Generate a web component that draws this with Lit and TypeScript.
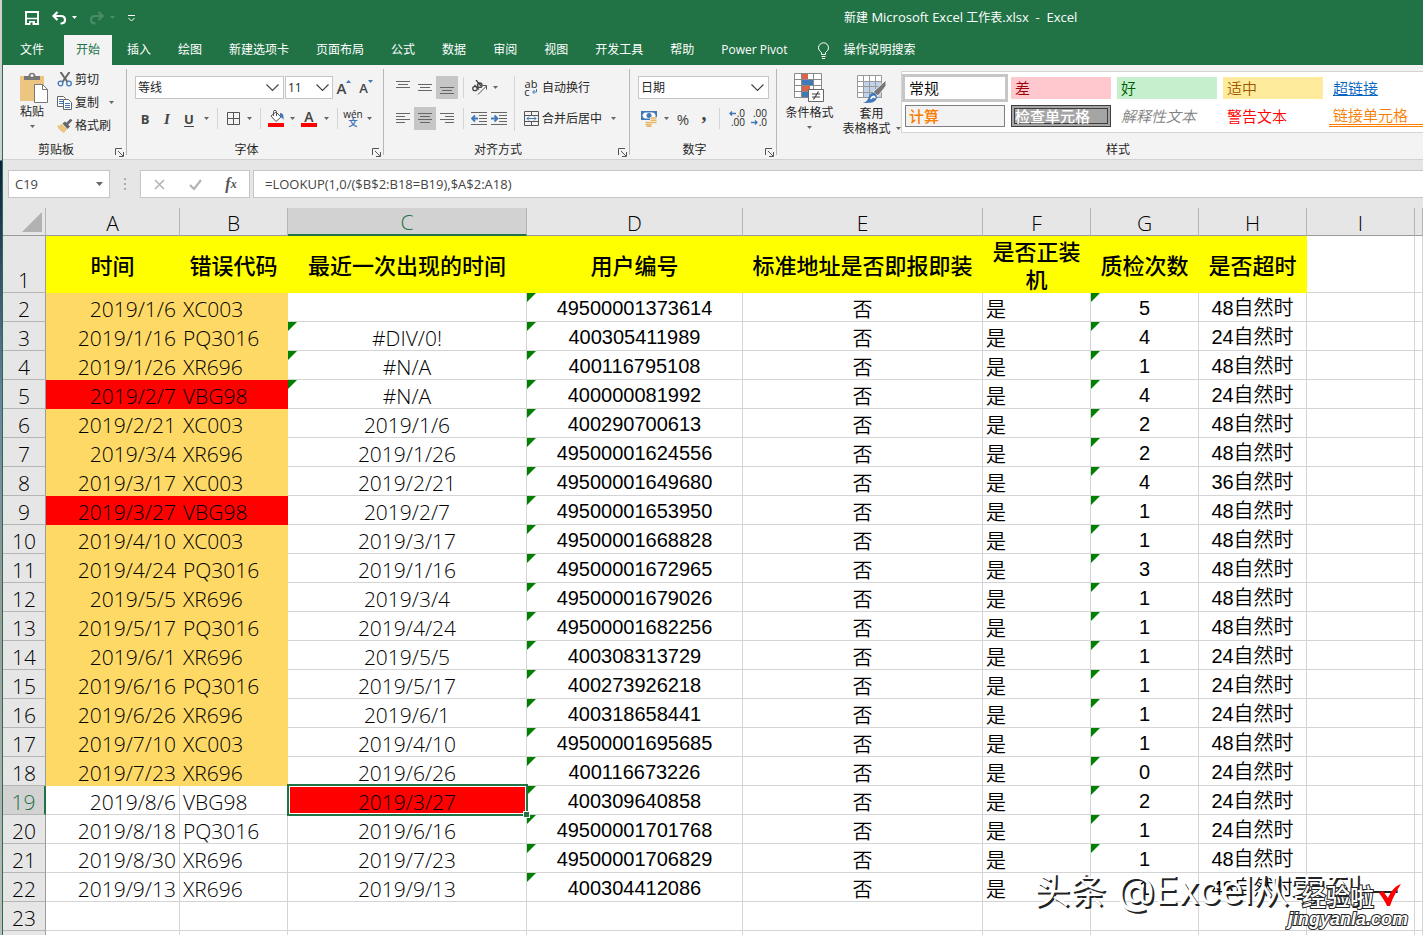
import { LitElement, html, css, svg, nothing } from "lit";
import { customElement } from "lit/decorators.js";
import { classMap } from "lit/directives/class-map.js";

type Row = [string, string, string, string, string, string];

// date, code, last seen, user id, checks, overtime
const ROWS: Row[] = [
  ["2019/1/6", "XC003", "", "49500001373614", "5", "48自然时"],
  ["2019/1/16", "PQ3016", "#DIV/0!", "400305411989", "4", "24自然时"],
  ["2019/1/26", "XR696", "#N/A", "400116795108", "1", "48自然时"],
  ["2019/2/7", "VBG98", "#N/A", "400000081992", "4", "24自然时"],
  ["2019/2/21", "XC003", "2019/1/6", "400290700613", "2", "48自然时"],
  ["2019/3/4", "XR696", "2019/1/26", "49500001624556", "2", "48自然时"],
  ["2019/3/17", "XC003", "2019/2/21", "49500001649680", "4", "36自然时"],
  ["2019/3/27", "VBG98", "2019/2/7", "49500001653950", "1", "48自然时"],
  ["2019/4/10", "XC003", "2019/3/17", "49500001668828", "1", "48自然时"],
  ["2019/4/24", "PQ3016", "2019/1/16", "49500001672965", "3", "48自然时"],
  ["2019/5/5", "XR696", "2019/3/4", "49500001679026", "1", "48自然时"],
  ["2019/5/17", "PQ3016", "2019/4/24", "49500001682256", "1", "48自然时"],
  ["2019/6/1", "XR696", "2019/5/5", "400308313729", "1", "24自然时"],
  ["2019/6/16", "PQ3016", "2019/5/17", "400273926218", "1", "24自然时"],
  ["2019/6/26", "XR696", "2019/6/1", "400318658441", "1", "24自然时"],
  ["2019/7/10", "XC003", "2019/4/10", "49500001695685", "1", "48自然时"],
  ["2019/7/23", "XR696", "2019/6/26", "400116673226", "0", "24自然时"],
  ["2019/8/6", "VBG98", "2019/3/27", "400309640858", "2", "24自然时"],
  ["2019/8/18", "PQ3016", "2019/6/16", "49500001701768", "1", "24自然时"],
  ["2019/8/30", "XR696", "2019/7/23", "49500001706829", "1", "48自然时"],
  ["2019/9/13", "XR696", "2019/9/13", "400304412086", "1", "48自然时"],
];

const HEADS = ["时间", "错误代码", "最近一次出现的时间", "用户编号", "标准地址是否即报即装", "是否正装机", "质检次数", "是否超时"];
const TABS = ["文件", "开始", "插入", "绘图", "新建选项卡", "页面布局", "公式", "数据", "审阅", "视图", "开发工具", "帮助", "Power Pivot"];

const icon = (w: number, h: number, body: unknown) =>
  html`<svg width=${w} height=${h} viewBox="0 0 ${w} ${h}" fill="none" aria-hidden="true">${body}</svg>`;

const caret = icon(5, 3, svg`<path d="M0 0h5L2.500 3z" fill="#666"/>`);
const lines = (spec: number[][]) =>
  icon(14, 13, svg`${spec.map(([x, y, w]) => svg`<path d="M${x} ${y + 0.5}h${w}" stroke="#666"/>`)}`);

const I = {
  save: icon(14, 14, svg`<path d="M1 1h12v12H1z" stroke="#fff" stroke-width="2"/><path d="M2 7.500h10" stroke="#fff" stroke-width="1.500"/><path d="M4 10h6v4H4z" fill="#fff"/><path d="M5.500 11.500h2V14h-2z" fill="#217346"/>`),
  undo: icon(16, 14, svg`<path d="M6.500 1L2.500 5l4 4M3 5h7c3 0 4 1.500 4 4s-1.500 3.500-4.500 3.500" stroke="#fff" stroke-width="2.200"/>`),
  redo: icon(16, 14, svg`<path d="M9.500 1l4 4-4 4M13 5H6C3 5 2 6.500 2 9s1.500 3.500 4.500 3.500" stroke="#4a8c69" stroke-width="2.200"/>`),
  more: icon(9, 8, svg`<path d="M1 1.500h7M1.500 4l3 3 3-3" stroke="#fff"/>`),
  bulb: icon(13, 17, svg`<path d="M4.500 12.500v-2C2.500 9 1.500 7.500 1.500 5.800a5 5 0 0 1 10 0c0 1.700-1 3.200-3 4.700v2zM4.500 14.500h4M5 16.500h3" stroke="#fff"/>`),
  paste: icon(30, 32, svg`<path d="M1 4h24v25H1z" fill="#ecc680"/><path d="M5 8V4h4.500c0-4.500 7-4.500 7 0H21v4z" fill="#777"/><circle cx="13" cy="3.500" r="1.500" fill="#f3f3f3"/><path d="M15.500 12.500h8l5 5v13h-13z" fill="#fff" stroke="#777"/><path d="M23.500 12.500v5h5" stroke="#777"/>`),
  cut: icon(15, 15, svg`<path d="M3 0l7 10M12 0L5 10" stroke="#666" stroke-width="2"/><circle cx="3" cy="11.500" r="2.300" stroke="#4178b8" stroke-width="1.300"/><circle cx="11.500" cy="11.500" r="2.300" stroke="#4178b8" stroke-width="1.300"/>`),
  copy: icon(16, 14, svg`<path d="M.5.5h6l2 2v8h-8z" fill="#fff" stroke="#666"/><path d="M2 3.500h4M2 5.500h4M2 7.500h4" stroke="#4178b8"/><path d="M6.500 3.500h5l3 3v7h-8z" fill="#fff" stroke="#666"/><path d="M8 7.500h5M8 9.500h5M8 11.500h5" stroke="#4178b8"/>`),
  brush: icon(16, 14, svg`<path d="M0 7l5-2 5 5-3 4C5 13 2 11 0 7z" fill="#ecc680"/><path d="M5.500 4.500l2.500-2 5 5-2.500 2.500z" fill="#666"/><path d="M10 5l4.500-4.500" stroke="#666" stroke-width="2.600"/>`),
  launch: icon(9, 9, svg`<path d="M.5 7V.5H7M3 3l5 5M8.500 4v4.500H4" stroke="#555"/>`),
  border: icon(13, 13, svg`<path d="M.5.5h12v12H.5zM6.500 1v11M1 6.500h11" stroke="#555"/>`),
  fill: icon(17, 17, svg`<path d="M3 6l5-4 5 5-5 4.500z" fill="#fff" stroke="#555"/><path d="M5.500 6V1.500c0-1.500 3-1.500 3 0V6" stroke="#555"/><path d="M12 3c3 0 4 2 3.500 7-1-2-2.500-3-3.500-2.500z" fill="#4178b8"/><path d="M0 13h16v4H0z" fill="red"/>`),
  merge: icon(15, 15, svg`<path d="M.5.5h14v14H.5zM.5 4.500h14M.5 10.500h14M7.500.5v4M7.500 10.500v4" stroke="#555"/><path d="M3 7.500h9M5 5.500l-2 2 2 2M10 5.500l2 2-2 2" stroke="#4178b8"/>`),
  orient: icon(17, 16, svg`<g stroke="#444" stroke-width="1.300"><circle cx="4" cy="8.500" r="2.200"/><path d="M3.500 5l4.500 4.500"/><circle cx="8.800" cy="5.200" r="2.200"/><path d="M5 0l5 6"/></g><path d="M7 14.500L15.500 6M11.500 5.500h4v4" stroke="#555"/>`),
  indentL: icon(16, 13, svg`<path d="M0 .5h16M8 3.500h8M8 6.500h8M8 9.500h8M0 12.500h16" stroke="#666"/><path d="M1 6.500h6M4 3.500l-3 3 3 3" stroke="#4178b8" stroke-width="1.800"/>`),
  indentR: icon(16, 13, svg`<path d="M0 .5h16M8 3.500h8M8 6.500h8M8 9.500h8M0 12.500h16" stroke="#666"/><path d="M0 6.500h6M3.500 3.500l3 3-3 3" stroke="#4178b8" stroke-width="1.800"/>`),
  wrap: icon(6, 5, svg`<path d="M4.500 0v3H1M2.500 1L.7 3l1.800 2" stroke="#4178b8"/>`),
  money: icon(17, 16, svg`<path d="M0 0h16v9H0z" fill="#4178b8"/><path d="M1.500 1.500h13v6h-13z" fill="#fff"/><path d="M1 1h3L1 4zM15 1v3l-3-3zM1 8V5l3 3z" fill="#4178b8"/><circle cx="8" cy="4.500" r="2.500" fill="#4178b8"/><path d="M9 6h7v9.500H5.500V10H9z" fill="#f3f3f3"/><path d="M10 7h5M10 9.200h5M10 11.400h5M5 11.400h4M5 13.400h5M6 15.300h4" stroke="#e8b666" stroke-width="1.500" stroke-linecap="round"/>`),
  arrowL: icon(7, 5, svg`<path d="M7 2.500H1M3 .5l-2 2 2 2" stroke="#4178b8" stroke-width="1.400"/>`),
  arrowR: icon(7, 5, svg`<path d="M0 2.500h6M4 .5l2 2-2 2" stroke="#4178b8" stroke-width="1.400"/>`),
  cond: icon(31, 30, svg`<path d="M.5.5h27v24H.5z" fill="#fff"/><path d="M8 1h6v5H8zM8 13h8v5H8z" fill="#d9644a"/><path d="M8 7h11v5H8zM8 19h6v6H8z" fill="#4178b8"/><path d="M.5.5h27v24H.5zM.5 6.500h27M.5 12.500h27M.5 18.500h27M7.500.5v24M19.500.5v24" stroke="#888"/><path d="M14.500 16.500h15v12h-15z" fill="#fff" stroke="#666"/><path d="M18 21h8M18 24h8M24.500 18.500l-5 8" stroke="#444" stroke-width="1.200"/>`),
  tableFmt: icon(30, 29, svg`<path d="M.5.5h24v22H.5z" fill="#fff"/><path d="M7 6h18v17H7z" fill="#c0d3ea"/><path d="M.5.5h24v22H.5zM.5 6.500h24M.5 11.500h24M.5 17.500h24M6.500.5v22M12.500.5v22M18.500.5v22" stroke="#999"/><path d="M29 5v6l-8 10-5-4z" fill="#777" stroke="#f3f3f3"/><path d="M17.500 18c3 2 3 5 1 7.500C16 28 12 28 6 28c4-1 5-4 6-6.500 1-3 3.500-4.500 5.500-3.500z" fill="#4178b8"/><path d="M14 24c1-3 3-3 4-1" stroke="#fff" stroke-width="2"/>`),
  cancel: icon(11, 11, svg`<path d="M1 1l9 9M10 1l-9 9" stroke="#b4b4b4" stroke-width="1.600"/>`),
  check: icon(13, 11, svg`<path d="M1 6l4 4 7-9" stroke="#b4b4b4" stroke-width="2.200"/>`),
  corner: icon(20, 20, svg`<path d="M20 0v20H0z" fill="#b2b2b2"/>`),
  tick: icon(24, 24, svg`<path d="M1 10l4-2 5 7C13 8 17 3 23 1c-4 6-8 13-11 22H9C7 18 4 14 1 10z" fill="red"/>`),
};

@customElement("app-root")
export class AppRoot extends LitElement {
  static styles = css`
    :host {
      display: block;
      height: 100vh;
      overflow: hidden;
      --ui: "Open Sans", "Noto Sans CJK SC", sans-serif;
      --sheet: "Noto Sans CJK SC", sans-serif;
      font: 12px/16px var(--ui);
      color: #262626;
    }
    * { box-sizing: border-box; }
    svg { display: block; flex: none; }
    button, input, select {
      font: inherit; color: inherit; border: 0; padding: 0; margin: 0;
      background: none; border-radius: 0; appearance: none; outline: 0;
    }
    .window {
      position: relative; height: 100%; overflow: hidden; margin-left: 2px;
      border-left: 1px solid #217346; background: #e6e6e6;
      display: flex; flex-direction: column;
    }
    .edge { height: 100%; background: linear-gradient(#d0d0d0 160px, #0b1f3f 161px, #6b83a3 400px, #9a9a9a 600px, #bdbdbd); }
    .green { background: #217346; color: #fff; flex: none; }
    .title { height: 35px; display: flex; align-items: center; }
    .quick { display: flex; align-items: center; padding-left: 22px; gap: 12px; flex: 0 0 841px; }
    .quick div { display: flex; align-items: center; gap: 5px; }
    .doc { white-space: pre; font-size: 13px; }
    .doc span { font-size: 12px; }
    .tabs { display: flex; gap: 3px; height: 30px; }
    .tab { padding: 0 12px; line-height: 28px; white-space: nowrap; }
    .tab:first-child { padding: 0 17px; }
    .tab.on { background: #f3f3f3; color: #217346; }
    .tell { display: flex; align-items: center; gap: 13px; padding: 0 15px; }
    .ribbon { display: flex; height: 95px; background: #f3f3f3; border-bottom: 1px solid #d2d2d2; overflow: hidden; flex: none; }
    .group { position: relative; display: flex; flex-direction: column; flex: none; padding-top: 3px; white-space: nowrap; }
    .group::after { content: ""; position: absolute; right: 0; top: 4px; height: 86px; width: 1px; background: #b8b8b8; }
    .group.clip { width: 124px; } .group.font { width: 257px; } .group.align { width: 246px; }
    .group.num { width: 147px; } .group.styles { width: 682px; }
    .group.styles::after { display: none; }
    .body { height: 70px; display: flex; flex: none; }
    .foot { display: flex; align-items: center; flex: 1; padding-top: 3px; }
    .foot span { flex: 1; text-align: center; }
    .foot button { width: 18px; height: 9px; padding-left: 6px; margin-top: 4px; }
    .big { display: flex; flex-direction: column; align-items: center; line-height: 15px; }
    .paste { width: 58px; padding-top: 4px; }
    .paste svg:first-child { margin-left: 4px; }
    .paste svg:last-child { margin-top: 6px; }
    .stack { display: flex; flex-direction: column; }
    .stack button { display: flex; align-items: center; height: 23px; gap: 2px; text-align: left; }
    .stack svg:first-child { width: 16px; margin-left: -4px; }
    .stack .gap { margin-left: 8px; }
    .stack .gap svg { margin: 0; width: 5px; }
    .rows { display: flex; flex-direction: column; gap: 8px; padding: 8px 0 0 7px; }
    .align .rows, .num .rows { padding-left: 8px; }
    .align .nopad { padding-left: 0; }
    .row { display: flex; align-items: center; height: 23px; }
    .b, .s, .a { display: flex; align-items: center; justify-content: center; height: 23px; flex: none; }
    .b { width: 22px; } .s { width: 20px; } .a { width: 12px; }
    .on2 { background: #c6c6c6; }
    .sep { width: 1px; height: 21px; margin: 0 5px; background: #d4d4d4; flex: none; }
    .tall { width: 1px; height: 55px; margin: 8px 5px 0; background: #d4d4d4; flex: none; }
    .glyph { color: #444; font-weight: 700; font-size: 13px; }
    .it { font-style: italic; font-family: "Liberation Serif", serif; font-size: 15px; }
    .un { text-decoration: underline; text-underline-offset: 2px; }
    .colorA { flex-direction: column; font-size: 14px; line-height: 13px; font-weight: 600; color: #444; }
    .colorA i { width: 16px; height: 4px; background: red; }
    .grow { font-size: 15px; color: #444; font-weight: 600; }
    .grow.small { font-size: 13px; }
    .grow svg { align-self: flex-start; margin-top: 4px; }
    .wen { flex-direction: column; line-height: 8px; font-size: 10px; }
    .wen b { color: #4178b8; font: 700 9px/9px var(--sheet); }
    .wrapico { flex-direction: column; line-height: 8px; font-size: 11px; }
    .wrapico span { display: flex; align-items: center; gap: 2px; }
    .dec { flex-direction: column; font-size: 10px; line-height: 9px; padding-bottom: 2px; }
    .dec span { display: flex; align-items: center; gap: 1px; align-self: flex-end; }
    .pct { font-size: 15px; color: #444; }
    .comma { font: 700 20px/10px "Liberation Serif", serif; color: #444; padding-bottom: 12px; }
    .label { display: flex; align-items: center; height: 23px; }
    .merge { gap: 5px; }
    select {
      height: 23px; border: 1px solid #c6c6c6; padding-left: 2px; color: #262626;
      background: #fff url('data:image/svg+xml,<svg xmlns="http://www.w3.org/2000/svg" width="13" height="8" fill="none" stroke="%23444" stroke-width="1.200"><path d="M.5.5l6 6 6-6"/></svg>') no-repeat right 4px center;
    }
    .face { width: 149px; margin-left: 1px; } .size { width: 48px; margin-left: 1px; } .fmt { width: 131px; }
    .size { background-position: right 3px center; }
    .cond { width: 65px; padding-top: 5px; }
    .cond span, .tfmt span { margin-top: 2px; }
    .cond svg:last-child { margin-top: 6px; }
    .tfmt { width: 59px; padding-top: 7px; }
    .tfmt div { display: flex; align-items: center; gap: 5px; }
    .gallery {
      margin-top: 3px; height: 62px; border: 1px solid #d4d4d4; background: #fff;
      display: grid; grid-template: 22px 22px / repeat(5, 100px); gap: 6px; padding: 5px 3px; flex: 1;
    }
    .cell { font: 350 15px/19px var(--sheet); padding: 0 0 2px 4px; text-align: left; height: 22px; white-space: nowrap; }
    .normal { outline: 3px solid #c6c6c6; color: #000; }
    .bad { background: #ffc7ce; color: #9c0006; } .good { background: #c6efce; color: #006100; }
    .neutral { background: #ffeb9c; color: #9c5700; } .link { color: #0563c1; text-decoration: underline; }
    .calc { background: #f2f2f2; border: 1px solid #7f7f7f; color: #fa7d00; font-weight: 500; padding: 0 0 2px 3px; line-height: 17px; }
    .chk { background: #a5a5a5; border: 4px double #3f3f3f; color: #fff; font-weight: 500; line-height: 12px; padding: 0; }
    .explain { color: #7f7f7f; font-style: italic; } .warn { color: red; }
    .linked { color: #fa7d00; border-bottom: 3px double #ff8001; padding-bottom: 0; line-height: 18px; }
    .fbar { display: flex; height: 48px; align-items: center; padding: 0 0 0 5px; flex: none; color: #444; font-size: 13px; }
    .box { background: #fff; border: 1px solid #c6c6c6; height: 28px; display: flex; align-items: center; }
    .name { width: 102px; padding: 0 6px; }
    .name input { width: 81px; }
    .dots { width: 30px; display: grid; justify-content: center; gap: 3px; }
    .dots i { width: 2px; height: 2px; background: #aaa; }
    .acts { width: 110px; }
    .acts button { width: 36px; display: flex; justify-content: center; }
    .fx { font: italic 700 16px/20px "Liberation Serif", serif; color: #555; }
    .fx small { font-size: 12px; }
    .formula { flex: 1; margin-left: 3px; border-right: 0; padding-left: 11px; }
    .formula input { flex: 1; min-width: 0; }
    table { border-collapse: separate; border-spacing: 0; table-layout: fixed; width: 100%; background: #fff; }
    .c0 { width: 43px; } .c1 { width: 134px; } .c2 { width: 108px; } .c3 { width: 239px; }
    .c4 { width: 216px; } .c5 { width: 240px; } .c6 { width: 108px; }
    th, td {
      padding: 3px 0 0; border-right: 1px solid #d4d4d4; border-bottom: 1px solid #d4d4d4; height: 29px;
      font: 350 20px/25px var(--sheet); color: #000; text-align: center; white-space: nowrap;
    }
    th, .date, .code, .last { font: 300 21px/24px "Open Sans", sans-serif; padding-top: 4px; }
    thead th { height: 28px; background: #e6e6e6; border-bottom-color: #9b9b9b; border-right-color: #b5b5b5; padding-top: 3px; }
    thead th.cur { background: #d2d2d2; color: #217346; border-bottom: 2px solid #217346; line-height: 23px; }
    thead .sel { padding: 4px 3px 3px 0; }
    .sel svg { margin-left: auto; }
    tbody th { background: #e6e6e6; border-right-color: #9b9b9b; border-bottom-color: #b5b5b5; }
    tbody th.cur { background: #d2d2d2; color: #217346; border-right: 2px solid #217346; }
    .first th { vertical-align: bottom; height: 57px; }
    .first .hd { font: 500 22px/28px var(--sheet); background: #ff0; border-color: #ff0; white-space: normal; padding: 0; }
    .hd div { height: 56px; display: flex; align-items: center; justify-content: center; padding: 0 8px; }
    .date { text-align: right; padding-right: 3px; }
    .code { text-align: left; padding-left: 3px; }
    .user, .qty { font: 20px/25px "Liberation Sans", sans-serif; }
    .time { font-family: "Liberation Sans", "Noto Sans CJK SC", sans-serif; }
    .yes { text-align: left; padding-left: 3px; }
    .amber { background: #ffd966; border-color: #ffd966; }
    .red { background: red; border-color: red; }
    .tri { position: relative; }
    .tri::before { content: ""; position: absolute; left: 0; top: 0; width: 9px; height: 9px; background: #008000; clip-path: polygon(0 0, 100% 0, 0 100%); }
    .active { background: red; position: relative; z-index: 1; }
    .active::before { content: ""; position: absolute; inset: -2px -2px -2px -1px; border: 2px solid #217346; box-shadow: inset 0 0 0 1px #fff; }
    .active::after { content: ""; position: absolute; right: -3px; bottom: -3px; width: 5px; height: 5px; background: #217346; outline: 1px solid #fff; }
    .mark { position: absolute; right: 26px; bottom: 21px; z-index: 2; font: 36px/48px var(--sheet); color: #fff; text-shadow: 2px 2px 0 #222; white-space: nowrap; }
    .mark span { font: 39px/48px "Inter", sans-serif; }
    .brand { position: absolute; right: 15px; bottom: 6px; z-index: 3; color: #fff; white-space: nowrap; font: 700 18px/20px "Liberation Sans", sans-serif; text-align: right; }
    .brand div { display: flex; justify-content: flex-end; gap: 4px; padding-right: 6px; font: 500 24px/26px var(--sheet); }
    .brand span { -webkit-text-stroke: 2px #222; paint-order: stroke fill; }
    .url { font-style: italic; }
  `;

  private foot(label: string, launch = true) {
    return html`<div class="foot"><span>${label}</span>${launch ? html`<button aria-label="${label}设置">${I.launch}</button>` : nothing}</div>`;
  }

  private ribbon() {
    const a = html`<button class="a" aria-label="更多">${caret}</button>`;
    const sep = html`<i class="sep"></i>`;
    return html`<div class="ribbon">
      <section class="group clip"><div class="body">
        <button class="big paste">${I.paste}<span>粘贴</span>${caret}</button>
        <div class="stack">
          <button>${I.cut}<span>剪切</span></button>
          <button>${I.copy}<span>复制</span><span class="gap">${caret}</span></button>
          <button>${I.brush}<span>格式刷</span></button>
        </div></div>${this.foot("剪贴板")}</section>
      <section class="group font"><div class="body"><div class="rows">
        <div class="row">
          <select class="face" aria-label="字体"><option>等线</option></select>
          <select class="size" aria-label="字号"><option>11</option></select>
          <button class="b grow">A${icon(5, 3, svg`<path d="M0 3h5L2.500 0z" fill="#4178b8"/>`)}</button>
          <button class="b grow small">A${icon(5, 3, svg`<path d="M0 0h5L2.500 3z" fill="#4178b8"/>`)}</button>
        </div>
        <div class="row">
          <button class="b glyph">B</button><button class="b glyph it">I</button><button class="b glyph un">U</button>${a}${sep}
          <button class="s" aria-label="边框">${I.border}</button>${a}${sep}
          <button class="s" aria-label="填充颜色">${I.fill}</button>${a}
          <button class="b colorA">A<i></i></button>${a}${sep}
          <button class="s wen">wén<b>文</b></button>${a}
        </div></div></div>${this.foot("字体")}</section>
      <section class="group align"><div class="body"><div class="rows">
        <div class="row">
          <button class="b" aria-label="顶端对齐">${lines([[0, 0, 14], [2, 3, 10], [0, 6, 14]])}</button>
          <button class="b" aria-label="垂直居中">${lines([[0, 3, 14], [2, 6, 10], [0, 9, 14]])}</button>
          <button class="b on2" aria-label="底端对齐">${lines([[0, 6, 14], [2, 9, 10], [0, 12, 14]])}</button>${sep}
          <button class="s" aria-label="方向">${I.orient}</button>${a}
        </div>
        <div class="row">
          <button class="b" aria-label="左对齐">${lines([[0, 1, 14], [0, 4, 9], [0, 7, 14], [0, 10, 9]])}</button>
          <button class="b on2" aria-label="居中">${lines([[0, 1, 14], [2, 4, 10], [0, 7, 14], [2, 10, 10]])}</button>
          <button class="b" aria-label="右对齐">${lines([[0, 1, 14], [5, 4, 9], [0, 7, 14], [5, 10, 9]])}</button>${sep}
          <button class="s" aria-label="减少缩进">${I.indentL}</button>
          <button class="s" aria-label="增加缩进">${I.indentR}</button>
        </div></div>
        <i class="tall"></i>
        <div class="rows nopad">
          <button class="label"><span class="b wrapico"><span>ab</span><span>c${I.wrap}</span></span>自动换行</button>
          <div class="row merge"><button class="label"><span class="b">${I.merge}</span><span>合并后居中</span></button>${a}</div>
        </div></div>${this.foot("对齐方式")}</section>
      <section class="group num"><div class="body"><div class="rows">
        <div class="row"><select class="fmt" aria-label="数字格式"><option>日期</option></select></div>
        <div class="row">
          <button class="b" aria-label="会计格式">${I.money}</button>${a}
          <button class="b pct">%</button><button class="s comma">,</button>${sep}
          <button class="s dec"><span>${I.arrowL}.0</span><span>.00</span></button>
          <button class="b dec"><span>.00</span><span>${I.arrowR}.0</span></button>
        </div></div></div>${this.foot("数字")}</section>
      <section class="group styles"><div class="body">
        <button class="big cond">${I.cond}<span>条件格式</span>${caret}</button>
        <button class="big tfmt">${I.tableFmt}<span>套用</span><div>表格格式${caret}</div></button>
        <div class="gallery">
          <button class="cell normal">常规</button><button class="cell bad">差</button><button class="cell good">好</button>
          <button class="cell neutral">适中</button><button class="cell link">超链接</button>
          <button class="cell calc">计算</button><button class="cell chk">检查单元格</button><button class="cell explain">解释性文本</button>
          <button class="cell warn">警告文本</button><button class="cell linked">链接单元格</button>
        </div></div>${this.foot("样式", false)}</section>
    </div>`;
  }

  private row(r: Row, i: number) {
    const n = i + 2;
    const hot = n === 5 || n === 9;
    const paint = { red: hot, amber: !hot && n < 19 };
    return html`<tr>
      <th scope="row" class=${classMap({ cur: n === 19 })}>${n}</th>
      <td class=${classMap({ date: true, ...paint })}>${r[0]}</td>
      <td class=${classMap({ code: true, ...paint })}>${r[1]}</td>
      <td class=${classMap({ last: true, tri: n > 2 && n < 6, active: n === 19 })}>${r[2]}</td>
      <td class="user tri">${r[3]}</td><td>否</td><td class="yes">是</td>
      <td class=${classMap({ qty: true, tri: n < 22 })}>${r[4]}</td><td class="time">${r[5]}</td><td></td><td></td>
    </tr>`;
  }

  render() {
    const blank = (n: number | string) => html`<tr><th scope="row">${n}</th>${Array.from({ length: 10 }, () => html`<td></td>`)}</tr>`;
    return html`<div class="edge"><main class="window">
      <div class="green">
        <div class="title">
          <div class="quick">
            <button aria-label="保存">${I.save}</button>
            <div><button aria-label="撤消">${I.undo}</button>${icon(5, 3, svg`<path d="M0 0h5L2.500 3z" fill="#fff"/>`)}</div>
            <div><button aria-label="恢复">${I.redo}</button>${icon(5, 3, svg`<path d="M0 0h5L2.500 3z" fill="#4a8c69"/>`)}</div>
            <button aria-label="自定义快速访问工具栏">${I.more}</button>
          </div>
          <div class="doc"><span>新建</span> Microsoft Excel <span>工作表</span>.xlsx  -  Excel</div>
        </div>
        <nav class="tabs">
          ${TABS.map((t) => html`<button class=${classMap({ tab: true, on: t === "开始" })}>${t}</button>`)}
          <button class="tell">${I.bulb}<span>操作说明搜索</span></button>
        </nav>
      </div>
      ${this.ribbon()}
      <div class="fbar">
        <div class="box name"><input aria-label="名称框" .value=${"C19"} />${icon(7, 4, svg`<path d="M0 0h7L3.500 4z" fill="#666"/>`)}</div>
        <div class="dots"><i></i><i></i><i></i></div>
        <div class="box acts"><button aria-label="取消">${I.cancel}</button><button aria-label="输入">${I.check}</button><button class="fx">f<small>x</small></button></div>
        <div class="box formula"><input aria-label="编辑栏" .value=${"=LOOKUP(1,0/($B$2:B18=B19),$A$2:A18)"} /></div>
      </div>
      <table>
        <colgroup><col class="c0" /><col class="c1" /><col class="c2" /><col class="c3" /><col class="c4" /><col class="c5" />
          <col class="c6" /><col class="c6" /><col class="c6" /><col class="c6" /><col /></colgroup>
        <thead><tr><th class="sel">${I.corner}</th>${"ABCDEFGHI".split("").map((c) => html`<th scope="col" class=${classMap({ cur: c === "C" })}>${c}</th>`)}<th></th></tr></thead>
        <tbody>
          <tr class="first"><th scope="row">1</th>${HEADS.map((h) => html`<td class="hd"><div>${h}</div></td>`)}<td></td><td></td></tr>
          ${ROWS.map((r, i) => this.row(r, i))}
          ${blank(23)}${blank("")}
        </tbody>
      </table>
      <div class="mark">头条<span> @Excel</span>从零到一</div>
      <div class="brand"><div><span>经验啦</span>${I.tick}</div><span class="url">jingyanla.com</span></div>
    </main></div>`;
  }
}
